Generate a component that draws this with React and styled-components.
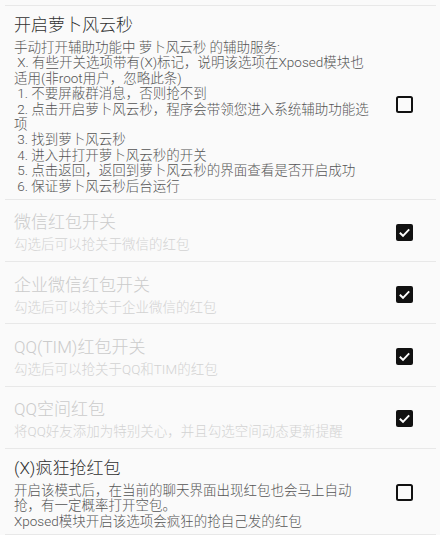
import React from 'react';
import styled, { createGlobalStyle } from 'styled-components';

const GlobalStyle = createGlobalStyle`
  html, body {
    margin: 0;
    padding: 0;
    background: #fafafa;
  }
  body {
    font-family: "Roboto", "Noto Sans CJK SC", sans-serif;
  }
`;

const Screen = styled.div`
  width: 440px;
  height: 535px;
  overflow: hidden;
  background: #fafafa;
  box-sizing: border-box;
  padding: 5px 4px 0 5px;
`;

const List = styled.div`
  border-top: 1px solid #e8e8e8;
`;

const Row = styled.div`
  display: flex;
  align-items: center;
  box-sizing: border-box;
  min-height: 62.2px;
  padding: 8px 0 5px 9px;
  border-bottom: 1px solid #e8e8e8;
`;

const TextBlock = styled.div`
  flex: 1;
  min-width: 0;
`;

const Title = styled.div`
  font-size: 17px;
  font-weight: 300;
  line-height: 22px;
  color: ${props => (props.disabled ? '#cbcbcb' : '#303030')};
`;

const Summary = styled.div`
  margin-top: 4px;
  font-size: 13.5px;
  font-weight: 300;
  line-height: 15.4px;
  white-space: pre-wrap;
  color: ${props => (props.disabled ? '#d2d2d2' : '#555')};
`;

const Widget = styled.div`
  width: 64px;
  flex: none;
  display: flex;
  justify-content: center;
  align-items: center;
`;

function CheckBox(props) {
  if (props.checked) {
    return (
      <svg width="17" height="17" viewBox="0 0 17 17">
        <rect x="0" y="0" width="17" height="17" rx="2" fill="#111" />
        <path d="M3.8 8.8 L7 11.8 L13.2 5.4" fill="none" stroke="#fff" strokeWidth="1.9" />
      </svg>
    );
  }
  return (
    <svg width="17" height="17" viewBox="0 0 17 17">
      <rect x="1" y="1" width="15" height="15" rx="1.5" fill="none" stroke="#111" strokeWidth="2" />
    </svg>
  );
}

const prefs = [
  {
    title: '开启萝卜风云秒',
    summary:
      '手动打开辅助功能中 萝卜风云秒 的辅助服务:\n X. 有些开关选项带有(X)标记，说明该选项在Xposed模块也适用(非root用户，忽略此条)\n 1. 不要屏蔽群消息，否则抢不到\n 2. 点击开启萝卜风云秒，程序会带领您进入系统辅助功能选项\n 3. 找到萝卜风云秒\n 4. 进入并打开萝卜风云秒的开关\n 5. 点击返回，返回到萝卜风云秒的界面查看是否开启成功\n 6. 保证萝卜风云秒后台运行',
    checked: false,
    disabled: false,
  },
  { title: '微信红包开关', summary: '勾选后可以抢关于微信的红包', checked: true, disabled: true },
  { title: '企业微信红包开关', summary: '勾选后可以抢关于企业微信的红包', checked: true, disabled: true },
  { title: 'QQ(TIM)红包开关', summary: '勾选后可以抢关于QQ和TIM的红包', checked: true, disabled: true },
  { title: 'QQ空间红包', summary: '将QQ好友添加为特别关心，并且勾选空间动态更新提醒', checked: true, disabled: true },
  {
    title: '(X)疯狂抢红包',
    summary: '开启该模式后，在当前的聊天界面出现红包也会马上自动抢，有一定概率打开空包。\nXposed模块开启该选项会疯狂的抢自己发的红包',
    checked: false,
    disabled: false,
  },
];

export default function App() {
  return (
    <Screen>
      <GlobalStyle />
      <List>
        {prefs.map((p, i) => (
          <Row key={i}>
            <TextBlock>
              <Title disabled={p.disabled}>{p.title}</Title>
              <Summary disabled={p.disabled}>{p.summary}</Summary>
            </TextBlock>
            <Widget>
              <CheckBox checked={p.checked} />
            </Widget>
          </Row>
        ))}
      </List>
    </Screen>
  );
}
